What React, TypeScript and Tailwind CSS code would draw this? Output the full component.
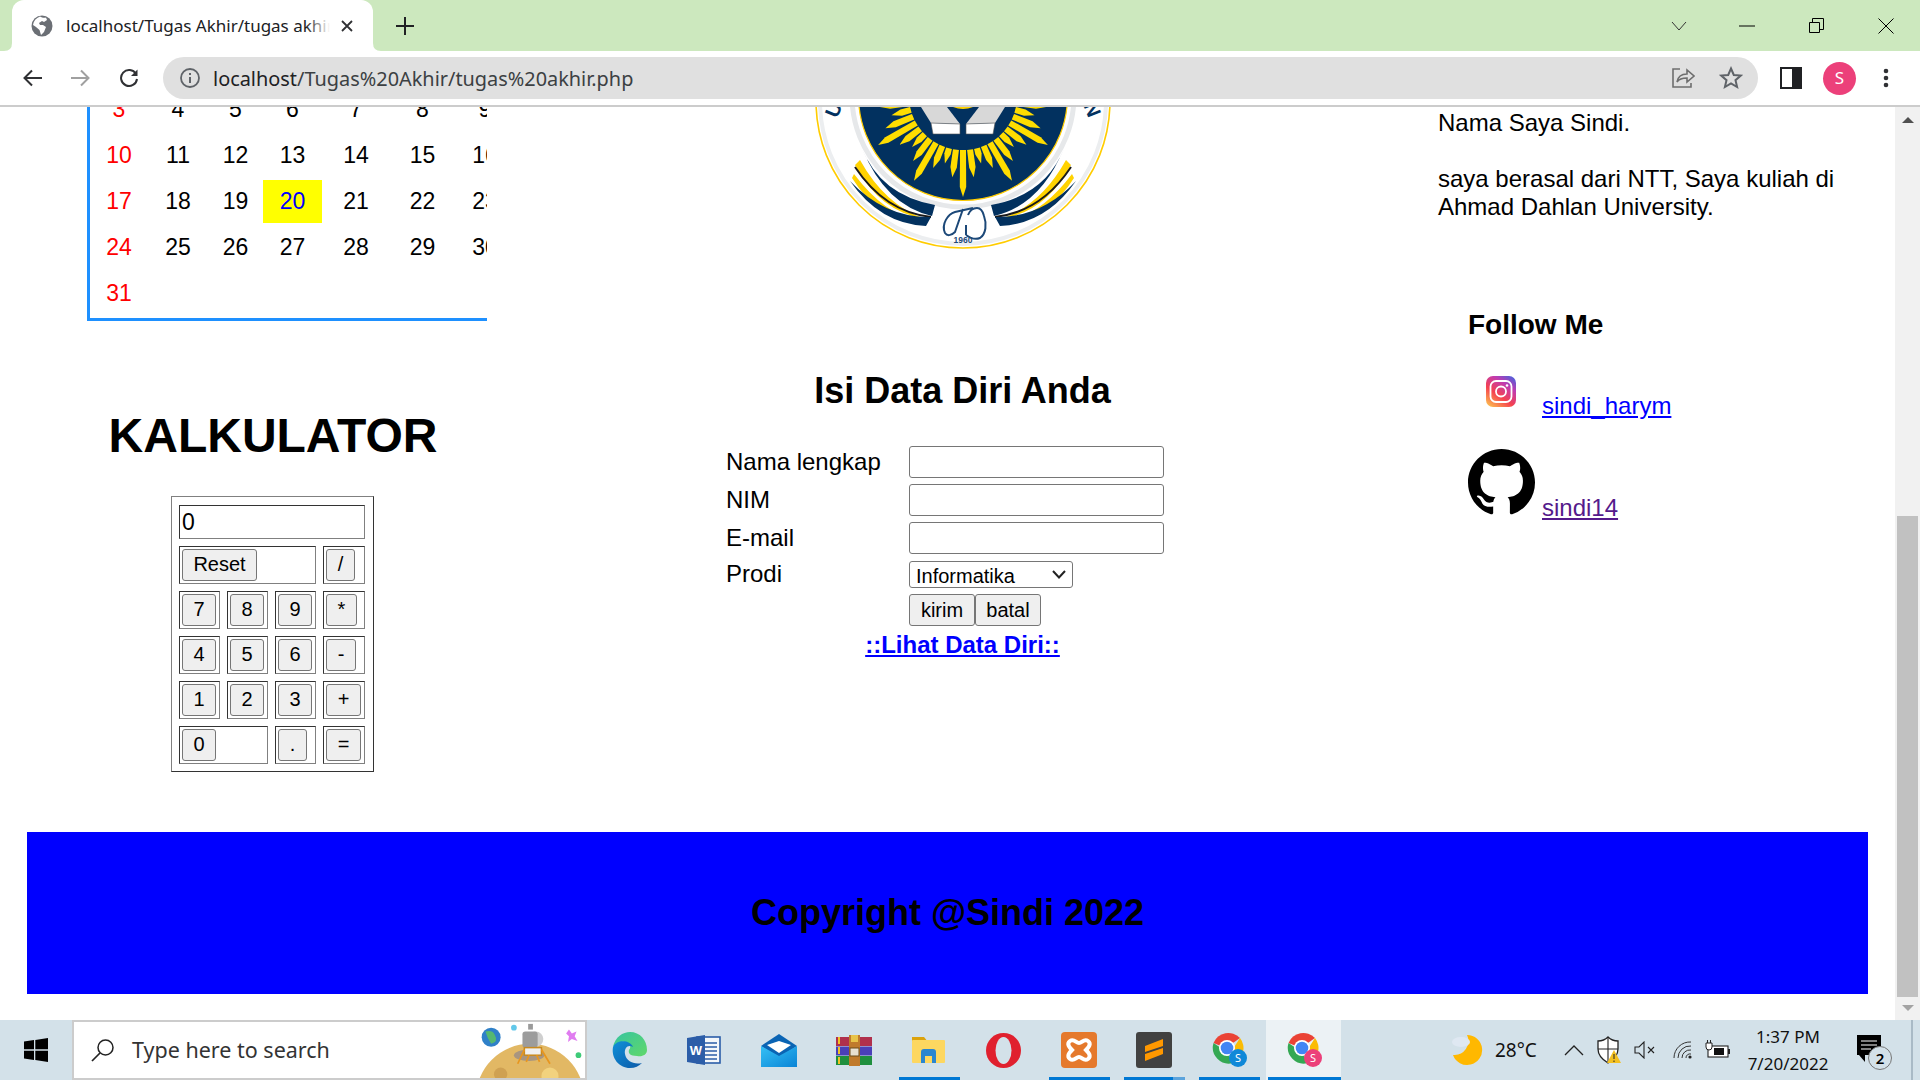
import React from "react";

const UI = "font-['Noto_Sans',sans-serif]";

function Cal() {
  const rows = [
    ["3", "4", "5", "6", "7", "8", "9"],
    ["10", "11", "12", "13", "14", "15", "16"],
    ["17", "18", "19", "20", "21", "22", "23"],
    ["24", "25", "26", "27", "28", "29", "30"],
    ["31", "", "", "", "", "", ""],
  ];
  return (
    <div className="ml-[60px] -mt-[19px] w-[400px] overflow-hidden border-l-[3px] border-b-[3px] border-[#1e90ff] pb-[3px]">
      <div className="grid w-[425px] grid-cols-[58px_60px_55px_59px_68px_65px_60px] auto-rows-[43px] gap-y-[3px] text-[23px]">
        {rows.flat().map((d, i) => (
          <div
            key={i}
            className={
              "flex items-center justify-center " +
              (d === "20" ? "bg-[#ffff00] text-[#0000ff]" : i % 7 === 0 ? "text-[#ff0000]" : "text-black")
            }
          >
            {d}
          </div>
        ))}
      </div>
    </div>
  );
}

function CB({ label, w }: { label: string; w: string }) {
  return (
    <button className={"h-[32px] rounded-[3px] border border-[#767676] bg-[#efefef] pb-[2px] text-[20px] leading-none text-black " + w}>
      {label}
    </button>
  );
}

function Cell({ children, span }: { children: React.ReactNode; span?: string }) {
  return (
    <div className={"border border-t-[#333333] border-l-[#333333] border-r-[#808080] border-b-[#808080] pl-[2px] pt-[2px] " + (span || "")}>
      {children}
    </div>
  );
}

function Calculator() {
  return (
    <div className="ml-[144px] mt-[33px] w-[203px] border border-t-[#808080] border-l-[#808080] border-r-[#333333] border-b-[#333333] pl-[7px] pr-[8px] pt-[8px] pb-[7px]">
      <div className="grid grid-cols-[41px_41px_41px_42px] grid-rows-[34px_repeat(5,38px)] gap-[7px]">
        <div className="col-span-4 border border-t-[#333333] border-l-[#333333] border-r-[#808080] border-b-[#808080] pl-[2px]">
          <input readOnly defaultValue="0" className="h-full w-full bg-transparent text-[23px] text-black outline-none" />
        </div>
        <Cell span="col-span-3"><CB label="Reset" w="w-[75px]" /></Cell>
        <Cell><CB label="/" w="w-[29px]" /></Cell>
        <Cell><CB label="7" w="w-[34px]" /></Cell>
        <Cell><CB label="8" w="w-[34px]" /></Cell>
        <Cell><CB label="9" w="w-[34px]" /></Cell>
        <Cell><CB label="*" w="w-[31px]" /></Cell>
        <Cell><CB label="4" w="w-[34px]" /></Cell>
        <Cell><CB label="5" w="w-[34px]" /></Cell>
        <Cell><CB label="6" w="w-[34px]" /></Cell>
        <Cell><CB label="-" w="w-[30px]" /></Cell>
        <Cell><CB label="1" w="w-[34px]" /></Cell>
        <Cell><CB label="2" w="w-[34px]" /></Cell>
        <Cell><CB label="3" w="w-[34px]" /></Cell>
        <Cell><CB label="+" w="w-[35px]" /></Cell>
        <Cell span="col-span-2"><CB label="0" w="w-[34px]" /></Cell>
        <Cell><CB label="." w="w-[29px]" /></Cell>
        <Cell><CB label="=" w="w-[35px]" /></Cell>
      </div>
    </div>
  );
}

function Logo() {
  const rays: React.ReactNode[] = [];
  const lens = [101, 82, 70, 78, 98, 82, 72, 80, 98, 84, 74, 84];
  for (let k = -11; k <= 11; k++) {
    const a = (k * 7.5 * Math.PI) / 180;
    const len = lens[Math.abs(k)];
    const cx = 963;
    const cy = 96;
    const px = (r: number, off: number) =>
      `${cx + Math.sin(a) * r + Math.cos(a) * off},${cy + Math.cos(a) * r - Math.sin(a) * off}`;
    rays.push(
      <polygon
        key={k}
        points={`${px(54, -3)} ${px(len - 10, -3.2)} ${px(len, 0)} ${px(len - 10, 3.2)} ${px(54, 3)}`}
        fill="#ffdd00"
      />
    );
  }
  const wing = (
    <g>
      <path d="M862,148 Q880,195 935,205 L932,216 Q885,205 862,148Z" fill="#02315f" />
      <path d="M860,160 Q885,205 925,219 Q880,212 855,165Z" fill="#ffd200" />
      <path d="M855,167 Q885,212 931,217" fill="none" stroke="#1a1a1a" strokeWidth="2" />
      <path d="M854,174 Q885,215 918,220 Q880,222 852,178Z" fill="#ffd200" />
      <path d="M850,181 Q885,218 931,217 L926,226 Q880,224 850,181Z" fill="#02315f" />
    </g>
  );
  return (
    <svg viewBox="813 107 300 143" className="mx-auto block h-[143px] w-[300px]">
      <circle cx="963" cy="101" r="147" fill="#ffffff" stroke="#ffcc00" strokeWidth="1.6" />
      <circle cx="963" cy="101" r="143" fill="none" stroke="#eceef0" strokeWidth="4" />
      <circle cx="963" cy="96" r="111" fill="#ffffff" stroke="#e6e8ea" strokeWidth="5" />
      <circle cx="963" cy="96" r="104.5" fill="#02315f" stroke="#ffcc00" strokeWidth="1.2" />
      {rays}
      <polygon points="921,107 947,107 960,124 931,123" fill="#d8d8d8" />
      <polygon points="1005,107 979,107 966,124 995,123" fill="#d8d8d8" />
      <polygon points="931,123 960,124 960,134 933,134" fill="#ffffff" stroke="#555555" strokeWidth="0.6" />
      <polygon points="995,123 966,124 966,134 993,134" fill="#ffffff" stroke="#555555" strokeWidth="0.6" />
      <path d="M953,107 Q963,111 973,107Z" fill="#ffd200" />
      {wing}
      <g transform="translate(1926,0) scale(-1,1)">{wing}</g>
      <text x="840" y="112" transform="rotate(-68 840 112)" fontSize="20" fontWeight="700" fill="#02315f" fontFamily="Liberation Sans" textAnchor="middle">U</text>
      <text x="1086" y="112" transform="rotate(68 1086 112)" fontSize="20" fontWeight="700" fill="#02315f" fontFamily="Liberation Sans" textAnchor="middle">N</text>
      <path d="M945,233 C941,224 948,214 955,212 L973,208 M963,209 L955,232 C951,236 947,236 945,233 M968,215 C970,210 974,208 977,208 C981,208 983,212 984,216 C987,224 986,234 980,238 C975,240 970,238 966,235 M966,225 L966,235" fill="none" stroke="#1c4878" strokeWidth="2" />
      <text x="963" y="243" fontSize="8.5" fontWeight="700" fill="#1c4878" fontFamily="Liberation Sans" textAnchor="middle">1960</text>
    </svg>
  );
}

function FormBlock() {
  const inp = "h-[32px] w-[255px] rounded-[3px] border border-[#767676] bg-white outline-none";
  const btn = "h-[32px] w-[66px] rounded-[3px] border border-[#767676] bg-[#efefef] text-[20px] text-black";
  return (
    <div>
      <h2 className="mt-[120px] text-center text-[36px] font-bold leading-[41px] text-black">Isi Data Diri Anda</h2>
      <div className="ml-[207px] mt-[35px] grid grid-cols-[183px_255px] text-[24px] leading-[28px] text-black">
        <div className="flex h-[32px] items-center">Nama lengkap</div>
        <input className={inp} />
        <div className="mt-[6px] flex h-[32px] items-center">NIM</div>
        <input className={"mt-[6px] " + inp} />
        <div className="mt-[6px] flex h-[32px] items-center">E-mail</div>
        <input className={"mt-[6px] " + inp} />
        <div className="mt-[6px]">Prodi</div>
        <div className="relative mt-[7px] h-[27px] w-[164px]">
          <select defaultValue="Informatika" className="h-[27px] w-[164px] appearance-none rounded-[3px] border border-[#767676] bg-white pl-[6px] text-[20px] text-black">
            <option>Informatika</option>
          </select>
          <svg viewBox="0 0 14 9" className="pointer-events-none absolute right-[7px] top-[9px] h-[9px] w-[14px]">
            <path d="M1,1 L7,7.5 L13,1" fill="none" stroke="#222" strokeWidth="2" />
          </svg>
        </div>
        <div />
        <div className="mt-[6px] flex">
          <button className={btn}>kirim</button>
          <button className={btn}>batal</button>
        </div>
      </div>
      <div className="mt-[5px] text-center">
        <a href="#" className="text-[24px] font-bold leading-[28px] text-[#0000ff] underline">::Lihat Data Diri::</a>
      </div>
    </div>
  );
}

function Instagram() {
  return (
    <svg viewBox="0 0 30 31" className="h-[31px] w-[30px] shrink-0">
      <defs>
        <linearGradient id="ig" x1="0.1" y1="1" x2="0.8" y2="0">
          <stop offset="0" stopColor="#fdc04f" />
          <stop offset="0.4" stopColor="#f5424f" />
          <stop offset="0.75" stopColor="#c13bb0" />
          <stop offset="1" stopColor="#5b5bd6" />
        </linearGradient>
      </defs>
      <rect x="0" y="0" width="30" height="31" rx="7" fill="url(#ig)" />
      <rect x="4.5" y="5" width="21" height="21" rx="5.5" fill="none" stroke="#fff" strokeWidth="1.8" />
      <circle cx="15" cy="15.5" r="5" fill="none" stroke="#fff" strokeWidth="1.8" />
      <circle cx="21" cy="9.5" r="1.3" fill="#fff" />
    </svg>
  );
}

function GitHub() {
  return (
    <svg viewBox="0 0 16 16" className="h-[67px] w-[67px] shrink-0" fill="#000">
      <path d="M8 0C3.58 0 0 3.58 0 8c0 3.54 2.29 6.53 5.47 7.59.4.07.55-.17.55-.38 0-.19-.01-.82-.01-1.49-2.01.37-2.53-.49-2.69-.94-.09-.23-.48-.94-.82-1.13-.28-.15-.68-.52-.01-.53.63-.01 1.08.58 1.23.82.72 1.21 1.87.87 2.33.66.07-.52.28-.87.51-1.07-1.78-.2-3.64-.89-3.64-3.95 0-.87.31-1.59.82-2.15-.08-.2-.36-1.02.08-2.12 0 0 .67-.21 2.2.82.64-.18 1.32-.27 2-.27.68 0 1.36.09 2 .27 1.53-1.04 2.2-.82 2.2-.82.44 1.1.16 1.92.08 2.12.51.56.82 1.27.82 2.15 0 3.07-1.87 3.75-3.65 3.95.29.25.54.73.54 1.48 0 1.07-.01 1.93-.01 2.2 0 .21.15.46.55.38A8.013 8.013 0 0016 8c0-4.42-3.58-8-8-8z" />
    </svg>
  );
}

function RightCol() {
  return (
    <div className="flex-1 pl-[32px] pt-[2px] text-[24px] leading-[28px] text-black">
      <p>Nama Saya Sindi.</p>
      <p className="mt-[28px] w-[420px]">saya berasal dari NTT, Saya kuliah di Ahmad Dahlan University.</p>
      <div className="pl-[30px]">
        <h3 className="mt-[88px] text-[28px] font-bold leading-[32px]">Follow Me</h3>
        <div className="mt-[35px] flex items-start pl-[18px]">
          <Instagram />
          <a href="#" className="ml-[26px] mt-[16px] text-[#0000ff] underline">sindi_harym</a>
        </div>
        <div className="mt-[29px] flex items-start">
          <GitHub />
          <a href="#" className="ml-[7px] mt-[45px] text-[#551a8b] underline">sindi14</a>
        </div>
      </div>
    </div>
  );
}

function TitleBar() {
  return (
    <div className="flex h-[51px] items-end bg-[#cce8be]">
      <div className={"relative ml-[12px] flex h-[51px] w-[361px] items-center rounded-t-[12px] bg-white pl-[19px] " + UI}>
        <svg viewBox="0 0 8 8" className="absolute bottom-0 left-[-8px] h-[8px] w-[8px]"><path d="M8,0 V8 H0 Q8,8 8,0Z" fill="#fff" /></svg>
        <svg viewBox="0 0 8 8" className="absolute bottom-0 right-[-8px] h-[8px] w-[8px]"><path d="M0,0 V8 H8 Q0,8 0,0Z" fill="#fff" /></svg>
        <svg viewBox="0 0 22 22" className="h-[22px] w-[22px] shrink-0">
          <circle cx="11" cy="11" r="10.5" fill="#6b6f75" />
          <path d="M9,1.5 C11,3 14,3 15,2.5 L16,5 13,7 11,6 8,8 9,10 12,10 15,12 13,17 10,20 8.5,15 5,12 2,10 C2.5,6 5,3 9,1.5Z" fill="#ffffff" />
        </svg>
        <div className="relative ml-[13px] w-[264px] overflow-hidden whitespace-nowrap text-[17px] text-[#202124]">
          localhost/Tugas Akhir/tugas akhir
          <div className="absolute right-0 top-0 h-full w-[24px] bg-gradient-to-r from-transparent to-white" />
        </div>
        <svg viewBox="0 0 12 12" className="ml-[11px] h-[12px] w-[12px]"><path d="M1,1 L11,11 M11,1 L1,11" stroke="#303134" strokeWidth="1.8" /></svg>
      </div>
      <div className="flex h-[51px] w-[64px] items-center justify-center">
        <svg viewBox="0 0 18 18" className="h-[18px] w-[18px]"><path d="M9,0 V18 M0,9 H18" stroke="#202124" strokeWidth="2" /></svg>
      </div>
      <div className="flex-1" />
      <div className="flex h-[51px] items-center">
        <svg viewBox="0 0 16 10" className="h-[10px] w-[16px]"><path d="M1,1 L8,9 L15,1" fill="none" stroke="#333" strokeWidth="1" /></svg>
        <svg viewBox="0 0 16 2" className="ml-[52px] h-[2px] w-[16px]"><path d="M0,1 H16" stroke="#000" strokeWidth="1" /></svg>
        <svg viewBox="0 0 15 15" className="ml-[54px] h-[15px] w-[15px]"><path d="M0.5,4.5 H10.5 V14.5 H0.5Z M3.5,4.5 V0.5 H14.5 V11.5 H10.5" fill="none" stroke="#000" strokeWidth="1" /></svg>
        <svg viewBox="0 0 16 16" className="ml-[54px] mr-[26px] h-[16px] w-[16px]"><path d="M0.5,0.5 L15.5,15.5 M15.5,0.5 L0.5,15.5" stroke="#000" strokeWidth="1" /></svg>
      </div>
    </div>
  );
}

function ToolBar() {
  return (
    <div className="flex h-[56px] items-center border-b-2 border-[#cccccc] bg-white">
      <svg viewBox="0 0 20 18" className="ml-[23px] h-[18px] w-[20px]"><path d="M19,9 H2 M9,1.5 L1.5,9 L9,16.5" fill="none" stroke="#303134" strokeWidth="2" /></svg>
      <svg viewBox="0 0 20 18" className="ml-[27px] h-[18px] w-[20px]"><path d="M1,9 H18 M11,1.5 L18.5,9 L11,16.5" fill="none" stroke="#a0a0a0" strokeWidth="2" /></svg>
      <svg viewBox="0 0 20 20" className="ml-[29px] h-[20px] w-[20px]"><path d="M17,6 A8,8 0 1 0 18,11" fill="none" stroke="#303134" strokeWidth="2" /><path d="M18.5,1.5 V8 H12Z" fill="#303134" /></svg>
      <div className="ml-[24px] flex h-[42px] w-[1595px] items-center rounded-full bg-[#e0e0e0] pl-[16px] pr-[15px]">
        <svg viewBox="0 0 22 22" className="h-[22px] w-[22px]"><circle cx="11" cy="11" r="9" fill="none" stroke="#5f6368" strokeWidth="1.8" /><path d="M11,10 V16 M11,6 V8" stroke="#5f6368" strokeWidth="2" /></svg>
        <span className={"ml-[12px] mt-[1px] whitespace-nowrap text-[19.9px] text-[#202124] " + UI}>
          localhost<span className="text-[#3c4043]">/Tugas%20Akhir/tugas%20akhir.php</span>
        </span>
        <div className="flex-1" />
        <svg viewBox="0 0 24 22" className="h-[22px] w-[24px]"><path d="M9,2 H2 V20 H20 V16" fill="none" stroke="#6e6e6e" strokeWidth="1.6" /><path d="M6,15 C7,9 11,7 16,7 V3 L23,9 L16,15 V11 C12,11 8,12 6,15Z" fill="none" stroke="#6e6e6e" strokeWidth="1.6" /></svg>
        <svg viewBox="0 0 24 24" className="ml-[24px] h-[24px] w-[24px]"><path d="M12,2.5 L14.8,9 L21.8,9.6 L16.5,14.2 L18.1,21 L12,17.4 L5.9,21 L7.5,14.2 L2.2,9.6 L9.2,9Z" fill="none" stroke="#5f6368" strokeWidth="2" /></svg>
      </div>
      <svg viewBox="0 0 22 22" className="ml-[22px] h-[22px] w-[22px]"><rect x="1" y="1" width="20" height="20" fill="#fff" stroke="#202124" strokeWidth="2" /><rect x="12" y="1" width="9" height="20" fill="#202124" /></svg>
      <div className={"ml-[21px] flex h-[33px] w-[33px] items-center justify-center rounded-full bg-[#ec407a] text-[17px] text-white " + UI}>S</div>
      <svg viewBox="0 0 6 20" className="ml-[27px] h-[20px] w-[6px]"><circle cx="3" cy="3" r="2.3" fill="#303134" /><circle cx="3" cy="10" r="2.3" fill="#303134" /><circle cx="3" cy="17" r="2.3" fill="#303134" /></svg>
    </div>
  );
}

function Scrollbar() {
  return (
    <div className="flex w-[25px] flex-col items-center bg-[#f1f1f1]">
      <svg viewBox="0 0 12 6" className="mt-[10px] h-[6px] w-[12px]"><path d="M6,0 L12,6 H0Z" fill="#505050" /></svg>
      <div className="mt-[393px] h-[481px] w-[21px] bg-[#c1c1c1]" />
      <svg viewBox="0 0 12 6" className="mt-[8px] h-[6px] w-[12px]"><path d="M0,0 H12 L6,6Z" fill="#a3a3a3" /></svg>
    </div>
  );
}

function Chrome({ badge }: { badge: string }) {
  return (
    <svg viewBox="0 0 36 36" className="h-[36px] w-[36px]">
      <path d="M15,16 L2.5,11 A16,16 0 0 1 29,6Z" fill="#ea4335" />
      <path d="M29,6 A16,16 0 0 1 22,31 L20,20 Z" fill="#fbbc04" />
      <path d="M2.5,11 A16,16 0 0 0 22,31 L16,20 Z" fill="#34a853" />
      <circle cx="16" cy="16" r="8" fill="#fff" />
      <circle cx="16" cy="16" r="6.3" fill="#4285f4" />
      <circle cx="27" cy="26" r="9" fill={badge} />
      <text x="27" y="30" fontSize="11" fill="#fff" textAnchor="middle" fontFamily="Noto Sans">S</text>
    </svg>
  );
}

function TaskIcon({ children, line, active, split }: { children: React.ReactNode; line?: boolean; active?: boolean; split?: boolean }) {
  return (
    <div className={"relative flex h-full w-[75px] items-center justify-center " + (active ? "bg-[#ecf2f5]" : "")}>
      {children}
      {line && (
        <div className={"absolute bottom-0 flex h-[3px] " + (active ? "left-[2px] right-0" : "left-[8px] right-[6px]")}>
          <div className="h-full flex-1 bg-[#0078d4]" />
          {split && <div className="h-full w-[12px] bg-[#5ba3dc]" />}
        </div>
      )}
    </div>
  );
}

function TaskBar() {
  return (
    <div className="flex h-[60px] items-center bg-[#d3e1e9]">
      <div className="flex h-full w-[72px] items-center justify-center">
        <svg viewBox="0 0 24 24" className="h-[24px] w-[24px]">
          <path d="M0,3.5 L10,2.1 V11.3 H0Z M11.3,1.9 L24,0 V11.3 H11.3Z M0,12.7 H10 V21.9 L0,20.5Z M11.3,12.7 H24 V24 L11.3,22.1Z" fill="#000" />
        </svg>
      </div>
      <div className="flex h-full w-[515px] items-center overflow-hidden border-2 border-[#cccccc] bg-white pl-[17px]">
        <svg viewBox="0 0 24 24" className="h-[24px] w-[24px] shrink-0"><circle cx="14.5" cy="9.5" r="7.5" fill="none" stroke="#222" strokeWidth="1.5" /><path d="M9,15 L1,23" stroke="#222" strokeWidth="1.7" /></svg>
        <span className={"ml-[17px] mt-[1px] whitespace-nowrap text-[21.5px] text-[#333] " + UI}>Type here to search</span>
        <div className="flex-1" />
        <svg viewBox="478 1021 108 59" className="h-[56px] w-[108px] shrink-0">
          <circle cx="490" cy="1037" r="10" fill="#2f80c8" />
          <path d="M484,1031 Q492,1029 494,1035 Q498,1042 490,1044 Q486,1038 484,1031Z" fill="#55b870" />
          <circle cx="514" cy="1027" r="3" fill="#62c8ea" />
          <path d="M572,1029 L575,1033 L580,1031 L578,1036 L581,1041 L575,1039 L571,1042 L572,1036 L569,1033Z" fill="#e07cf0" />
          <circle cx="582" cy="1056" r="3" fill="#3ecb78" />
          <circle cx="531" cy="1101" r="57" fill="#e2b864" />
          <circle cx="500" cy="1076" r="7" fill="#cfa152" />
          <circle cx="552" cy="1078" r="9" fill="#f2d27e" />
          <ellipse cx="530" cy="1056" rx="16" ry="6" fill="#a89580" />
          <rect x="529" y="1023" width="5" height="6" fill="#9a9a9a" />
          <circle cx="537" cy="1039" r="8" fill="#cfcfcf" />
          <rect x="523" y="1031" width="16" height="17" rx="3" fill="#9c9c9c" />
          <rect x="525" y="1048" width="18" height="8" fill="#f0f0f0" stroke="#c88a20" strokeWidth="1.6" />
          <path d="M525,1050 L518,1065 M543,1050 L552,1065 M530,1056 L527,1063 M538,1056 L541,1063" stroke="#e8961e" strokeWidth="1.8" />
        </svg>
      </div>
      <div className="ml-[4px] flex h-full">
        <TaskIcon>
          <svg viewBox="0 0 36 36" className="h-[36px] w-[36px]">
            <defs>
              <linearGradient id="edge1" x1="0" y1="0" x2="1" y2="1"><stop offset="0" stopColor="#36c4a0" /><stop offset="1" stopColor="#60d86a" /></linearGradient>
              <linearGradient id="edge2" x1="0" y1="0" x2="1" y2="1"><stop offset="0" stopColor="#1090d8" /><stop offset="1" stopColor="#0c5aa8" /></linearGradient>
            </defs>
            <path d="M2,15 C4,5 12,0 19,0 C29,0 36,8 36,18 C36,23 31,25 26,24 C19,24 17,21 18,18 C22,14 16,9 11,10 C6,11 3,13 2,15Z" fill="url(#edge1)" />
            <path d="M2,15 C0,26 8,36 19,36 C24,36 28,34 31,31 C23,33 15,29 14,22 C13,16 17,12 22,15 C19,8 6,7 2,15Z" fill="url(#edge2)" />
          </svg>
        </TaskIcon>
        <TaskIcon>
          <svg viewBox="0 0 34 30" className="h-[30px] w-[34px]">
            <rect x="10" y="2" width="23" height="26" fill="#f4f7fa" stroke="#2b5da8" strokeWidth="1.6" />
            <path d="M17,8 H30 M17,12 H30 M17,16 H30 M17,20 H30 M17,24 H30" stroke="#2b5da8" strokeWidth="1.4" />
            <path d="M0,3 L18,0 V30 L0,27Z" fill="#2b5da8" />
            <text x="9" y="20" fontSize="13" fontWeight="700" fill="#fff" textAnchor="middle" fontFamily="Liberation Sans">W</text>
          </svg>
        </TaskIcon>
        <TaskIcon>
          <svg viewBox="0 0 36 33" className="h-[33px] w-[36px]">
            <defs><linearGradient id="mail" x1="0" y1="0" x2="1" y2="1"><stop offset="0" stopColor="#35c0f5" /><stop offset="1" stopColor="#0a84d6" /></linearGradient></defs>
            <path d="M18,0 L36,12 L18,24 L0,12Z" fill="#0a64b4" />
            <path d="M6,11 L18,7 L30,11 L18,19Z" fill="#ffffff" />
            <path d="M0,12 L18,22 L36,12 V33 H0Z" fill="url(#mail)" />
          </svg>
        </TaskIcon>
        <TaskIcon>
          <svg viewBox="0 0 36 31" className="h-[31px] w-[36px]">
            <rect x="0" y="2" width="36" height="9" fill="#b0304c" />
            <rect x="0" y="11.5" width="36" height="9" fill="#4a40b8" />
            <rect x="0" y="21" width="36" height="9" fill="#1f8f3e" />
            <path d="M3,2 V9 M3,12 V19 M3,22 V29" stroke="#f2c224" strokeWidth="2" />
            <rect x="13" y="0" width="11" height="31" fill="#c07a2c" />
            <rect x="15" y="0" width="7" height="7" fill="#e8c348" />
            <rect x="14" y="13" width="9" height="8" fill="#e8e0d0" stroke="#6a4a1a" />
          </svg>
        </TaskIcon>
        <TaskIcon line>
          <svg viewBox="0 0 33 26" className="h-[26px] w-[33px]">
            <path d="M0,0 H12 L16,5 H0Z" fill="#dca30c" />
            <rect x="0" y="3" width="33" height="23" rx="1" fill="#fdd760" />
            <path d="M9,26 V15 Q9,12 12,12 H21 Q24,12 24,15 V26 H20 V19 H13 V26Z" fill="#2a86d0" />
          </svg>
        </TaskIcon>
        <TaskIcon>
          <svg viewBox="0 0 35 35" className="h-[35px] w-[35px]">
            <circle cx="17.5" cy="17.5" r="17.5" fill="#e0202e" />
            <ellipse cx="17.5" cy="17.5" rx="8" ry="13.5" fill="#d3e1e9" />
          </svg>
        </TaskIcon>
        <TaskIcon line>
          <svg viewBox="0 0 36 36" className="h-[36px] w-[36px]">
            <rect x="0" y="0" width="36" height="36" rx="4" fill="#e5792c" />
            <path d="M9,9 C13,6 15,11 18,11 C21,11 23,6 27,9 C31,12 27,16 25,18 C27,20 31,24 27,27 C23,30 21,25 18,25 C15,25 13,30 9,27 C5,24 9,20 11,18 C9,16 5,12 9,9Z" fill="none" stroke="#fff" strokeWidth="4" />
          </svg>
        </TaskIcon>
        <TaskIcon line split>
          <svg viewBox="0 0 36 36" className="h-[36px] w-[36px]">
            <rect x="0" y="0" width="36" height="36" rx="3" fill="#414141" />
            <path d="M27,7 V14 L9,20 V14Z M9,22 L27,16 V22 L9,29Z" fill="#ff9800" />
          </svg>
        </TaskIcon>
        <TaskIcon line><Chrome badge="#0f88d8" /></TaskIcon>
        <TaskIcon line active><Chrome badge="#ec407a" /></TaskIcon>
      </div>
      <div className="ml-[110px] flex h-full items-center">
        <svg viewBox="0 0 32 34" className="h-[34px] w-[32px]">
          <path d="M16,2 A15,15 0 1 1 2,22 A14,14 0 0 0 16,2Z" fill="#ffb800" />
          <ellipse cx="10" cy="9" rx="9" ry="5" fill="#dfe8f2" />
        </svg>
        <div className={"ml-[12px] w-[43px] whitespace-nowrap text-[19px] text-[#111] " + UI}>28°C</div>
        <div className="ml-[24px] flex w-[24px] justify-center">
          <svg viewBox="0 0 20 11" className="h-[11px] w-[20px]"><path d="M1,10 L10,1 L19,10" fill="none" stroke="#222" strokeWidth="1.3" /></svg>
        </div>
        <div className="ml-[11px] flex w-[24px] justify-center">
          <svg viewBox="0 0 24 28" className="h-[28px] w-[24px]">
            <path d="M11,1 C8,4 4,5 1,5 V13 C1,20 6,24 11,27 C16,24 21,20 21,13 V5 C18,5 14,4 11,1Z" fill="#fff" stroke="#222" strokeWidth="1.3" />
            <path d="M11,1 V27 M1,13 H21" stroke="#222" strokeWidth="1.1" />
            <path d="M17,14 L24,27 H10Z" fill="#f4c020" />
            <path d="M17,18 V23 M17,24.5 V26" stroke="#222" strokeWidth="1" />
          </svg>
        </div>
        <div className="ml-[12px] flex w-[24px] justify-center">
          <svg viewBox="0 0 22 18" className="h-[18px] w-[22px]"><path d="M1,6 H5 L10,1 V17 L5,12 H1Z" fill="none" stroke="#222" strokeWidth="1.1" /><path d="M14,6 L20,12 M20,6 L14,12" stroke="#222" strokeWidth="1.1" /></svg>
        </div>
        <div className="ml-[14px] flex w-[24px] justify-center">
          <svg viewBox="0 0 20 18" className="h-[18px] w-[20px]"><path d="M1,17 A16,16 0 0 1 18,1 M5,17 A12,12 0 0 1 18,5 M9,17 A8,8 0 0 1 18,9 M13,17 A4,4 0 0 1 18,13" fill="none" stroke="#333" strokeWidth="1" /><circle cx="17" cy="16" r="1.6" fill="#222" /></svg>
        </div>
        <div className="ml-[10px] flex w-[26px] justify-center">
          <svg viewBox="0 0 26 20" className="h-[20px] w-[26px]">
            <rect x="3" y="6" width="20" height="11" fill="#fff" stroke="#222" strokeWidth="1.1" />
            <rect x="9" y="8" width="10" height="7" fill="#111" />
            <rect x="23" y="9" width="2" height="5" fill="#222" />
            <path d="M1,3 H7 V7 Q7,10 4,10 Q1,10 1,7Z M2.5,0 V3 M5.5,0 V3" fill="#fff" stroke="#222" strokeWidth="1" />
          </svg>
        </div>
        <div className={"ml-[7px] flex w-[100px] flex-col items-center text-[17px] leading-[27px] text-[#111] " + UI}>
          <div>1:37 PM</div>
          <div>7/20/2022</div>
        </div>
        <div className="relative ml-[19px] h-[30px] w-[30px]">
          <svg viewBox="0 0 26 30" className="h-[30px] w-[26px]">
            <path d="M0,0 H24 V20 H8 V27 L2,20 H0Z" fill="#000" />
            <path d="M4,6 H20 M4,10 H20 M4,14 H14" stroke="#fff" strokeWidth="1" />
          </svg>
          <div className={"absolute left-[11px] top-[11px] flex h-[24px] w-[24px] items-center justify-center rounded-full border border-[#777] bg-[#d3e1e9] text-[15px] font-semibold text-black " + UI}>2</div>
        </div>
        <div className="ml-[24px] h-full w-[2px] bg-[#a9bac6]" />
      </div>
    </div>
  );
}

export default function App() {
  return (
    <div className="flex h-[1080px] w-[1920px] flex-col overflow-hidden bg-white font-['Liberation_Sans',Arial,sans-serif]">
      <TitleBar />
      <ToolBar />
      <div className="flex h-[913px]">
        <div className="w-[1895px] overflow-hidden pl-[27px] pr-[27px]">
          <div className="flex h-[725px]">
            <div className="w-[492px]">
              <Cal />
              <h1 className="mt-[87px] text-center text-[48px] font-bold leading-[55px] text-black">KALKULATOR</h1>
              <Calculator />
            </div>
            <div className="w-[887px]">
              <Logo />
              <FormBlock />
            </div>
            <RightCol />
          </div>
          <div className="flex h-[162px] items-center justify-center bg-[#0000ff] pb-[1px] text-[36px] font-bold text-black">
            Copyright @Sindi 2022
          </div>
        </div>
        <Scrollbar />
      </div>
      <TaskBar />
    </div>
  );
}
